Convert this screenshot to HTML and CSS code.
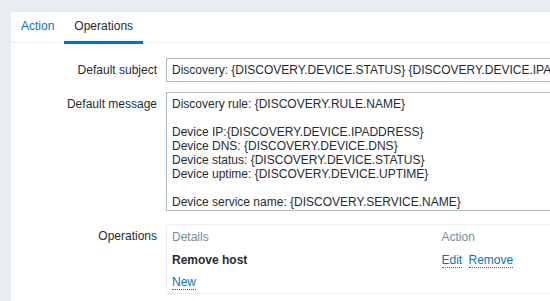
FILE: index.html
```html
<!DOCTYPE html>
<html lang="en">

<head>
    <meta charset="UTF-8">
    <meta name="viewport" content="width=device-width, initial-scale=1.0">
    <title>Action operations</title>
    <link rel="stylesheet" href="styles.css">
</head>

<body>
    <div class="card">
        <ul class="tabs">
            <li class="tab"><a href="#">Action</a></li>
            <li class="tab active"><a href="#">Operations</a></li>
        </ul>
        <div class="form">
            <label class="label">Default subject</label>
            <div class="field">
                <div class="input">Discovery: {DISCOVERY.DEVICE.STATUS} {DISCOVERY.DEVICE.IPADDRESS}</div>
            </div>

            <label class="label">Default message</label>
            <div class="field">
                <div class="textarea">Discovery rule: {DISCOVERY.RULE.NAME}

Device IP:{DISCOVERY.DEVICE.IPADDRESS}
Device DNS: {DISCOVERY.DEVICE.DNS}
Device status: {DISCOVERY.DEVICE.STATUS}
Device uptime: {DISCOVERY.DEVICE.UPTIME}

Device service name: {DISCOVERY.SERVICE.NAME}</div>
            </div>

            <label class="label label-ops">Operations</label>
            <div class="field field-ops">
                <table class="ops">
                    <thead>
                        <tr>
                            <th class="col-details">Details</th>
                            <th>Action</th>
                        </tr>
                    </thead>
                    <tbody>
                        <tr>
                            <td class="col-details"><b>Remove host</b></td>
                            <td><a class="link" href="#">Edit</a> <a class="link" href="#">Remove</a></td>
                        </tr>
                        <tr class="last">
                            <td colspan="2"><a class="link" href="#">New</a></td>
                        </tr>
                    </tbody>
                </table>
            </div>
        </div>
    </div>
</body>

</html>
```

FILE: styles.css
```css
* {
    margin: 0;
    padding: 0;
    box-sizing: border-box;
}
html,
body {
    font-size: 12px;
    font-family: "Liberation Sans", Arial, Helvetica, sans-serif;
    color: #1f2c33;
}
body {
    background-color: #ebeef0;
    padding: 11px 0 0 11px;
    overflow: hidden;
    height: 301px;
}
a {
    color: #0275b8;
    text-decoration: none;
}
.card {
    background: #fff;
    width: 700px;
    border-top: 1px solid #e4e8ea;
    padding-bottom: 20px;
}
.tabs {
    display: flex;
    list-style: none;
    border-bottom: 1px solid #ebeef0;
    height: 31px;
}
.tab {
    padding: 0 10px;
    line-height: 28px;
    border-bottom: 3px solid transparent;
    height: 32px;
}
.tab.active {
    border-bottom-color: #0275b8;
}
.tab.active a {
    color: #1f2c33;
}
.form {
    display: grid;
    grid-template-columns: 146px 1fr;
    column-gap: 9px;
    row-gap: 10px;
    padding-top: 15px;
}
.label {
    text-align: right;
    line-height: 24px;
}
.input {
    height: 24px;
    border: 1px solid #acbbc4;
    padding: 0 5px;
    line-height: 22px;
    white-space: nowrap;
    overflow: hidden;
}
.textarea {
    height: 119px;
    border: 1px solid #acbbc4;
    padding: 4px 5px;
    line-height: 14px;
    white-space: pre;
    overflow: hidden;
}
.label-ops,
.field-ops {
    margin-top: 3px;
}
.label-ops {
    line-height: 14px;
    padding-top: 5px;
}
.ops {
    width: 100%;
    border-collapse: collapse;
    border: 1px solid #ebeef0;
    line-height: 14px;
}
.ops th {
    color: #768d99;
    font-weight: normal;
    text-align: left;
    padding: 5px 5px 3px;
}
.ops td {
    padding: 6px 5px 3px;
}
.ops tr.last td {
    padding: 5px 5px 4px;
}
.col-details {
    width: 270px;
}
.link {
    border-bottom: 1px dotted #0275b8;
    margin-right: 3px;
}
```
